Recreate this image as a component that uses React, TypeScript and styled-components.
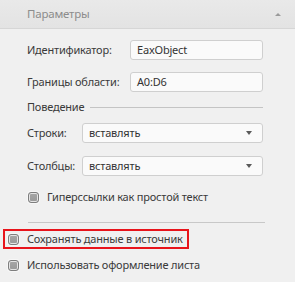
import styled, { createGlobalStyle } from "styled-components";

const GlobalStyle = createGlobalStyle`
  html, body {
    margin: 0;
    padding: 0;
    background: #f0f0f0;
  }
  body {
    font-family: "Noto Sans", "Open Sans", sans-serif;
    font-size: 11px;
    line-height: 14px;
    letter-spacing: -0.2px;
    color: #3a3a3a;
    white-space: nowrap;
  }
`;

const Panel = styled.div`
  width: 295px;
  height: 282px;
  background: #f0f0f0;
  overflow: hidden;
`;

const Header = styled.div`
  height: 28px;
  display: flex;
  align-items: center;
  justify-content: space-between;
  padding: 0 14px 0 27px;
  background: linear-gradient(#e9e9e9, #e3e3e3);
  border-bottom: 1px solid #d6d6d6;
  color: #8c8c8c;
  font-size: 11.5px;
`;

const Caret = styled.span`
  width: 0;
  height: 0;
  border-left: 3px solid transparent;
  border-right: 3px solid transparent;
  border-bottom: 3px solid #9a9a9a;
`;

const Body = styled.div`
  padding: 11px 32px 0 27px;
`;

const Row = styled.div<{ $label: number; $gap?: number }>`
  display: grid;
  grid-template-columns: ${(p) => p.$label}px 1fr;
  align-items: center;
  height: 20px;
  margin-top: ${(p) => p.$gap ?? 0}px;
`;

const Label = styled.span`
  color: #3a3a3a;
`;

const Input = styled.div`
  height: 18px;
  border: 1px solid #cfcfcf;
  border-radius: 3px;
  background: #fafafa;
  padding: 0 6px;
  display: flex;
  align-items: center;
  color: #333;
`;

const Select = styled(Input)`
  justify-content: space-between;
  padding-right: 10px;
`;

const Arrow = styled.span`
  width: 0;
  height: 0;
  border-left: 3.5px solid transparent;
  border-right: 3.5px solid transparent;
  border-top: 4px solid #5a5a5a;
`;

const Section = styled.div`
  display: flex;
  align-items: center;
  gap: 6px;
  margin-top: 8px;
  height: 14px;
  &::after {
    content: "";
    flex: 1;
    height: 1px;
    background: #c4c4c4;
  }
`;

const Check = styled.div<{ $indent?: number; $gap?: number }>`
  display: flex;
  align-items: center;
  gap: 8px;
  padding-left: ${(p) => p.$indent ?? 0}px;
  margin-top: ${(p) => p.$gap ?? 0}px;
  height: 14px;
`;

const Box = styled.span`
  flex: none;
  width: 9px;
  height: 9px;
  border-radius: 3px;
  border: 1px solid #7e7e7e;
  background: linear-gradient(#a6a6a6, #9a9a9a);
  box-shadow: 0 0 0 1px #e4e4e4 inset, 0 0 0 1px #f7f7f7;
`;

const Divider = styled.div`
  height: 1px;
  background: #c8c8c8;
  margin: 18px 30px 0 28px;
`;

const Footer = styled.div`
  padding-top: 6px;
`;

const Highlight = styled.div`
  display: inline-flex;
  margin-left: 3px;
  border: 2px solid #e8141b;
  padding: 1px 4px 1px 3px;
`;

export default function App() {
  return (
    <>
      <GlobalStyle />
      <Panel>
        <Header>
          <span>Параметры</span>
          <Caret />
        </Header>
        <Body>
          <Row $label={103}>
            <Label>Идентификатор:</Label>
            <Input>EaxObject</Input>
          </Row>
          <Row $label={103} $gap={12}>
            <Label>Границы области:</Label>
            <Input>A0:D6</Input>
          </Row>
          <Section>Поведение</Section>
          <Row $label={55} $gap={9}>
            <Label>Строки:</Label>
            <Select>
              вставлять
              <Arrow />
            </Select>
          </Row>
          <Row $label={55} $gap={13}>
            <Label>Столбцы:</Label>
            <Select>
              вставлять
              <Arrow />
            </Select>
          </Row>
          <Check $indent={1} $gap={14}>
            <Box />
            Гиперссылки как простой текст
          </Check>
        </Body>
        <Divider />
        <Footer>
          <Highlight>
            <Check>
              <Box />
              Сохранять данные в источник
            </Check>
          </Highlight>
          <Check $indent={8} $gap={9}>
            <Box />
            Использовать оформление листа
          </Check>
        </Footer>
      </Panel>
    </>
  );
}
